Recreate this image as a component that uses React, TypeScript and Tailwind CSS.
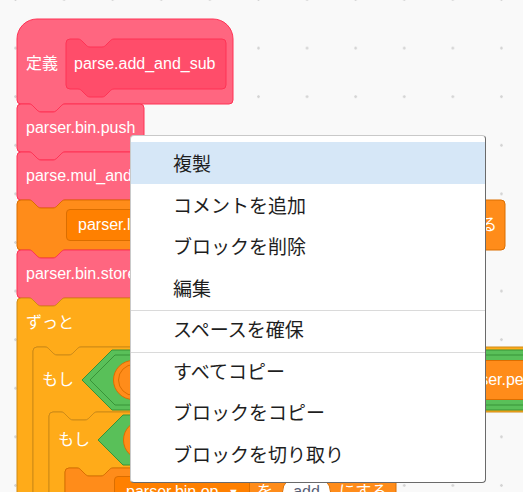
import type { ReactNode } from 'react';

// scratch block colours
type Paint = { fill: string; stroke: string };
const PINK: Paint = { fill: '#FF6680', stroke: '#FF3355' };
const PINK_DARK: Paint = { fill: '#FF4D6A', stroke: '#FF3355' };
const VAR: Paint = { fill: '#FF8C1A', stroke: '#DB6E00' };
const CTRL: Paint = { fill: '#FFAB19', stroke: '#CF8B17' };
const OP: Paint = { fill: '#59C059', stroke: '#389438' };

// notch going right (dips into block) / going left (tab sticking out below)
const NR = 'c2,0 3,1 4,2 l4,4 c1,1 2,2 4,2 h12 c2,0 3,-1 4,-2 l4,-4 c1,-1 2,-2 4,-2';
const NL = 'c-2,0 -3,1 -4,2 l-4,4 c-1,1 -2,2 -4,2 h-12 c-2,0 -3,-1 -4,-2 l-4,-4 c-1,-1 -2,-2 -4,-2';

const stackPath = (w: number, h: number) =>
  `M0,4 A4,4 0 0 1 4,0 H12 ${NR} H${w - 4} A4,4 0 0 1 ${w},4 V${h - 4} A4,4 0 0 1 ${w - 4},${h} H48 ${NL} H4 A4,4 0 0 1 0,${h - 4} Z`;

const hatPath = (w: number, h: number) =>
  `M0,20 A20,20 0 0 1 20,0 H${w - 20} A20,20 0 0 1 ${w},20 V${h - 4} A4,4 0 0 1 ${w - 4},${h} H48 ${NL} H4 A4,4 0 0 1 0,${h - 4} Z`;

const cPath = (w: number, arm: number, rail: number) =>
  `M0,4 A4,4 0 0 1 4,0 H12 ${NR} H${w - 4} A4,4 0 0 1 ${w},4 V${arm - 4} A4,4 0 0 1 ${w - 4},${arm} H64 ${NL} H20 A4,4 0 0 0 16,${arm + 4} V${rail} H0 Z`;

const hexPath = (w: number, h: number) =>
  `M${h / 2},0 H${w - h / 2} L${w},${h / 2} L${w - h / 2},${h} H${h / 2} L0,${h / 2} Z`;

const Shape = ({ d, p, w, h }: { d: string; p: Paint; w: number; h: number }) => (
  <svg className="absolute left-0 top-0 overflow-visible" width={w} height={h}>
    <path d={d} fill={p.fill} stroke={p.stroke} strokeWidth={1} />
  </svg>
);

const Stack = ({ w, h = 48, p, box, children }: { w: number; h?: number; p: Paint; box: string; children: ReactNode }) => (
  <div className={`relative shrink-0 ${box}`}>
    <Shape d={stackPath(w, h)} p={p} w={w} h={h} />
    <div className="relative flex h-full items-center whitespace-nowrap">{children}</div>
  </div>
);

const CBlock = ({ w, arm, armBox, label, cond, children }: { w: number; arm: number; armBox: string; label: string; cond?: ReactNode; children?: ReactNode }) => (
  <div className="relative flex flex-col">
    <Shape d={cPath(w, arm, 420)} p={CTRL} w={w} h={arm} />
    <div className={`relative flex items-center gap-[8px] whitespace-nowrap pl-[9px] ${armBox}`}>
      <span>{label}</span>
      {cond}
    </div>
    <div className="relative flex flex-col pl-[16px]">{children}</div>
  </div>
);

const Hex = ({ w, h, box, children }: { w: number; h: number; box: string; children: ReactNode }) => (
  <div className={`relative flex shrink-0 items-center ${box}`}>
    <Shape d={hexPath(w, h)} p={OP} w={w} h={h} />
    <div className="relative flex items-center">{children}</div>
  </div>
);

const Dropdown = ({ box, children }: { box: string; children: ReactNode }) => (
  <div className={`flex h-[32px] shrink-0 items-center justify-between rounded-[4px] border border-[#DB6E00] bg-[#FF8000] pl-[11px] pr-[10px] ${box}`}>
    <span>{children}</span>
    <span className="text-[11px]">▼</span>
  </div>
);

const MENU: (string | null)[] = ['複製', 'コメントを追加', 'ブロックを削除', '編集', null, 'スペースを確保', null, 'すべてコピー', 'ブロックをコピー', 'ブロックを切り取り'];

export default function App() {
  return (
    <div className="relative h-[492px] w-[523px] overflow-hidden bg-[#F9F9F9] bg-[radial-gradient(circle,#d4d4d4_1px,transparent_1.6px)] bg-[length:48.6px_48.6px] bg-[position:-8.8px_-24.8px] font-['Liberation_Sans','Noto_Sans_CJK_JP',sans-serif] text-[16px] leading-none text-white">
      {/* script on the workspace canvas */}
      <div className="absolute left-[17px] top-[19px] flex flex-col">
        {/* define hat */}
        <div className="relative h-[85px] w-[216px] shrink-0">
          <Shape d={hatPath(216, 85)} p={PINK} w={216} h={85} />
          <div className="relative flex gap-[8px] pl-[9px] pt-[20px]">
            <span className="flex h-[50px] items-center">定義</span>
            <Stack w={160} h={50} p={PINK_DARK} box="h-[50px] w-[160px]">
              <span className="pl-[8px]">parse.add_and_sub</span>
            </Stack>
          </div>
        </div>

        <Stack w={127} p={PINK} box="h-[48px] w-[127px]">
          <span className="pl-[9px]">parser.bin.push</span>
        </Stack>
        <Stack w={180} p={PINK} box="h-[48px] w-[180px]">
          <span className="pl-[9px]">parse.mul_and_div</span>
        </Stack>

        {/* set variable */}
        <Stack w={488} h={50} p={VAR} box="h-[50px] w-[488px]">
          <div className="flex w-full items-center pl-[49px] pr-[8px]">
            <Dropdown box="w-[120px]">parser.lhs</Dropdown>
            <span className="ml-[7px]">を</span>
            <div className="ml-[9px] flex h-[32px] items-center rounded-full border border-[#DB6E00] bg-[#FF8C1A] px-[12px]">parser.bin.pop</div>
            <span className="ml-auto">にする</span>
          </div>
        </Stack>

        <Stack w={180} p={PINK} box="h-[48px] w-[180px]">
          <span className="pl-[9px]">parser.bin.store</span>
        </Stack>

        {/* forever */}
        <CBlock w={160} arm={49} armBox="h-[49px]" label="ずっと">
          <CBlock
            w={540}
            arm={65}
            armBox="h-[65px]"
            label="もし"
            cond={
              <Hex w={480} h={60} box="h-[60px] w-[480px]">
                <div className="pl-[8px]">
                  <Hex w={460} h={50} box="h-[50px] w-[460px]">
                    <div className="ml-[23px] flex h-[40px] w-[440px] items-center rounded-full border border-[#DB6E00] bg-[#FF8C1A] pl-[4px]">
                      <div className="flex h-[32px] w-[331px] items-center rounded-full border border-[#DB6E00] bg-[#FF8C1A] pl-[12px]">parser.bin.op</div>
                      <span className="ml-[8px]">parser.peek</span>
                    </div>
                  </Hex>
                </div>
              </Hex>
            }
          >
            <CBlock
              w={400}
              arm={56}
              armBox="h-[56px]"
              label="もし"
              cond={
                <Hex w={330} h={50} box="h-[50px] w-[330px]">
                  <div className="ml-[25px] flex h-[40px] w-[280px] items-center rounded-full border border-[#DB6E00] bg-[#FF8C1A] pl-[12px]">parser.peek</div>
                </Hex>
              }
            >
              <Stack w={331} p={VAR} box="h-[48px] w-[331px]">
                <div className="flex items-center pl-[49px]">
                  <Dropdown box="w-[136px]">parser.bin.op</Dropdown>
                  <span className="ml-[7px]">を</span>
                  <div className="ml-[9px] flex h-[32px] w-[49px] items-center justify-center rounded-full border border-[#DB6E00] bg-white text-[#575E75]">add</div>
                  <span className="ml-[8px]">にする</span>
                </div>
              </Stack>
            </CBlock>
          </CBlock>
        </CBlock>
      </div>

      {/* context menu */}
      <div className="absolute left-[130px] top-[135px] flex h-[348px] w-[356px] flex-col rounded-[4px] border border-[#c9c9c9] border-b-[#6a6a6a] border-r-[#6a6a6a] bg-white pt-[6px] font-['Noto_Sans_CJK_JP',sans-serif] text-[19px] text-[#1e1e1e]">
        {MENU.map((item, i) =>
          item === null ? (
            <div key={i} className="-mb-[3px] mt-[2px] h-px bg-[#dadada]" />
          ) : (
            <div key={i} className={`flex h-[41.5px] shrink-0 items-center pl-[42px] ${i === 0 ? 'bg-[#D6E7F7]' : ''}`}>
              {item}
            </div>
          )
        )}
      </div>
    </div>
  );
}
